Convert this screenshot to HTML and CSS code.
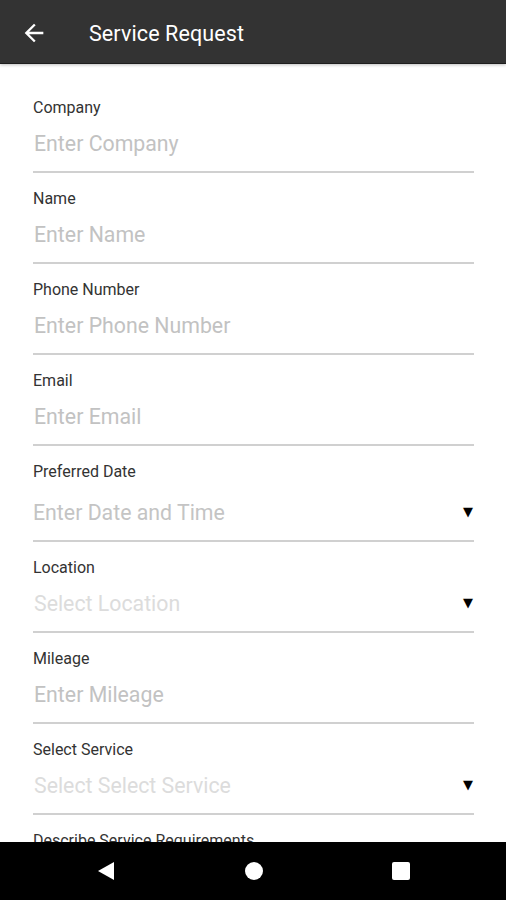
FILE: index.html
```html
<!DOCTYPE html>
<html lang="en">

<head>
  <meta charset="UTF-8" />
  <meta name="viewport" content="width=device-width, initial-scale=1.0" />
  <title>Service Request</title>
  <link rel="stylesheet" href="styles.css">
</head>

<body>
  <header class="toolbar">
    <button class="back-btn" aria-label="Back">
      <svg viewBox="0 0 24 24" width="28" height="28">
        <path d="M20 11H7.83l5.59-5.59L12 4l-8 8 8 8 1.41-1.41L7.83 13H20v-2z" fill="#fff" />
      </svg>
    </button>
    <h1>Service Request</h1>
  </header>

  <form class="form">
    <div class="field">
      <label>Company</label>
      <input type="text" placeholder="Enter Company">
    </div>
    <div class="field">
      <label>Name</label>
      <input type="text" placeholder="Enter Name">
    </div>
    <div class="field">
      <label>Phone Number</label>
      <input type="text" placeholder="Enter Phone Number">
    </div>
    <div class="field">
      <label>Email</label>
      <input type="text" placeholder="Enter Email">
    </div>
    <div class="field field-date">
      <label>Preferred Date</label>
      <div class="picker">
        <span class="placeholder">Enter Date and Time</span>
        <span class="arrow">▼</span>
      </div>
    </div>
    <div class="field">
      <label>Location</label>
      <div class="picker">
        <span class="placeholder light">Select Location</span>
        <span class="arrow">▼</span>
      </div>
    </div>
    <div class="field">
      <label>Mileage</label>
      <input type="text" placeholder="Enter Mileage">
    </div>
    <div class="field">
      <label>Select Service</label>
      <div class="picker">
        <span class="placeholder light">Select Select Service</span>
        <span class="arrow">▼</span>
      </div>
    </div>
    <div class="field">
      <label>Describe Service Requirements</label>
      <input type="text" placeholder="Enter Description">
    </div>
  </form>

  <nav class="navbar">
    <svg viewBox="0 0 20 20" width="20" height="20">
      <path d="M18 1 L18 19 L2 10 Z" fill="#fff" />
    </svg>
    <span class="nav-home"></span>
    <span class="nav-recent"></span>
  </nav>
</body>

</html>
```

FILE: styles.css
```css
body {
  margin: 0;
  font-family: Roboto, 'Noto Sans', sans-serif;
  background-color: #fff;
  color: #333;
  overflow: hidden;
}

.toolbar {
  height: 63px;
  background-color: #333;
  display: flex;
  align-items: center;
  border-bottom: 1px solid #1e1e1e;
  box-shadow: 0 1px 3px rgba(0, 0, 0, 0.25);
  position: relative;
  z-index: 1;
}

.back-btn {
  background: none;
  border: none;
  padding: 0;
  margin: 2px 0 0 20px;
  width: 28px;
  height: 28px;
  display: flex;
}

.toolbar h1 {
  margin: 3px 0 0 41px;
  font-size: 21.5px;
  font-weight: 400;
  color: #fff;
  letter-spacing: 0.1px;
}

.form {
  padding: 34px 32px 80px 33px;
}

.field {
  display: flex;
  flex-direction: column;
  border-bottom: 2px solid #d0d0d0;
  padding-bottom: 13px;
  margin-bottom: 16px;
}

.field label {
  font-size: 16px;
  line-height: 20px;
  color: #333;
  margin-bottom: 12px;
}

.field input {
  border: none;
  outline: none;
  padding: 0 0 0 1px;
  margin: 0;
  height: 28px;
  font-family: inherit;
  font-size: 21.3px;
  line-height: 28px;
  color: #333;
  background: transparent;
}

.field input::placeholder {
  color: #c2c2c2;
}

.picker {
  display: flex;
  justify-content: space-between;
  align-items: center;
  height: 28px;
}

.field-date .picker {
  margin-top: 5px;
}

.placeholder {
  font-size: 21.3px;
  line-height: 28px;
  color: #c4c4c4;
}

.placeholder.light {
  color: #dcdcdc;
  padding-left: 1px;
}

.arrow {
  font-family: 'DejaVu Sans', sans-serif;
  font-size: 13px;
  color: #000;
  margin: -4px 1px 0 0;
}

.navbar {
  position: fixed;
  left: 0;
  right: 0;
  bottom: 0;
  height: 58px;
  background-color: #000;
  display: flex;
  align-items: center;
  justify-content: space-between;
  padding: 0 96px 0 96px;
  z-index: 2;
}

.nav-home {
  width: 18px;
  height: 18px;
  border-radius: 50%;
  background-color: #fff;
}

.nav-recent {
  width: 18px;
  height: 18px;
  border-radius: 2px;
  background-color: #fff;
}
```
